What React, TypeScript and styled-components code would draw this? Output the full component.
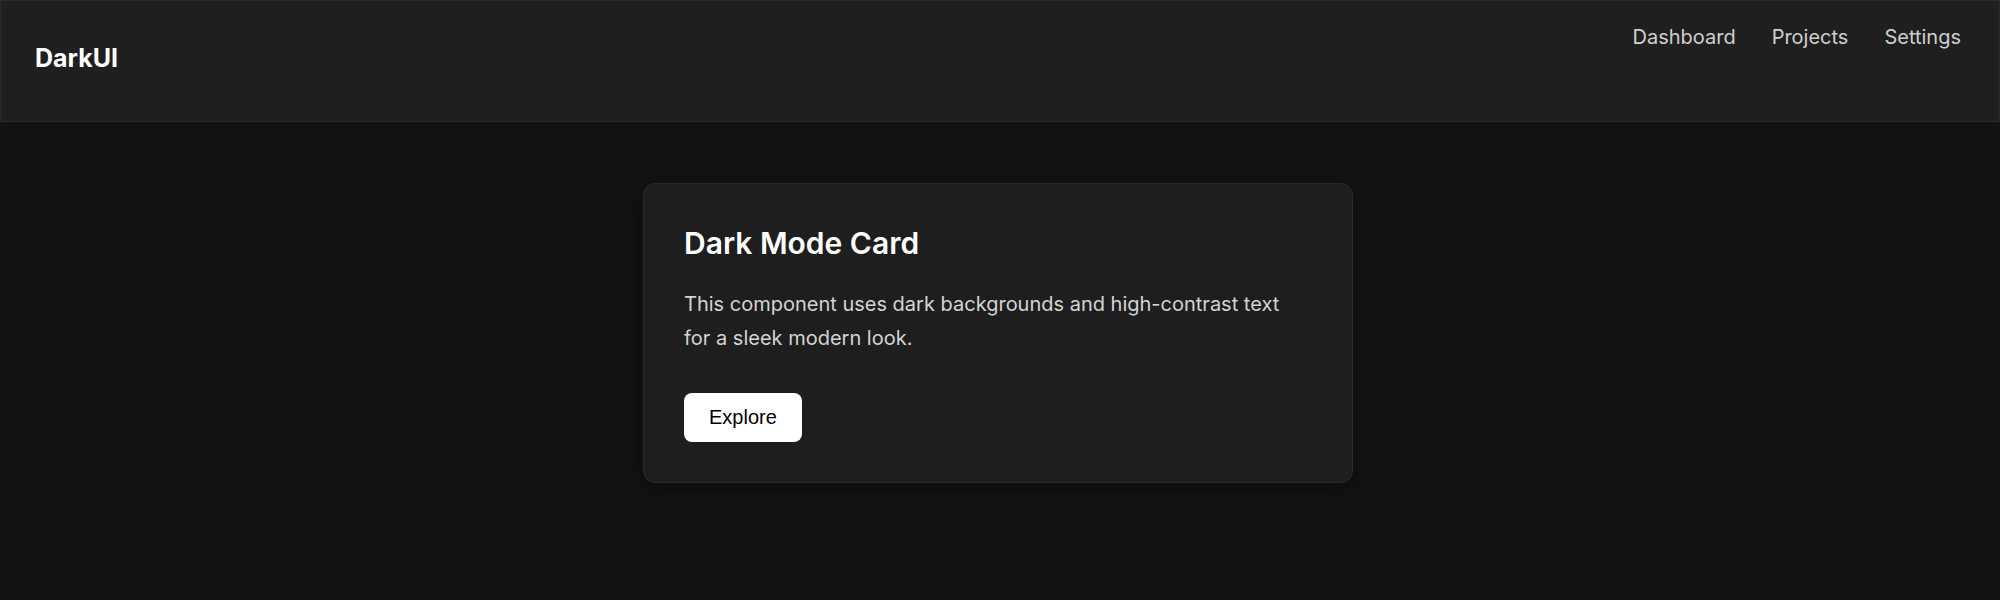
import React from 'react';
import styled, { createGlobalStyle } from 'styled-components';

const GlobalStyle = createGlobalStyle`
  html, body {
    margin: 0;
    padding: 0;
    background: #121212;
    font-family: Inter, 'Noto Sans', sans-serif;
    color: #fff;
  }
`;

const Page = styled.div`
  min-height: 100vh;
  background: #121212;
`;

const Header = styled.header`
  box-sizing: border-box;
  height: 122px;
  display: flex;
  justify-content: space-between;
  align-items: flex-start;
  padding: 24px 38px 24px 34px;
  background: #1f1f1f;
  border: 1px solid #2a2a2a;
`;

const Logo = styled.div`
  margin-top: 18px;
  font-size: 25px;
  font-weight: 650;
  color: #fff;
`;

const Nav = styled.nav`
  display: flex;
  gap: 36px;
`;

const NavLink = styled.a`
  font-size: 20px;
  color: #cfcfcf;
  text-decoration: none;
  cursor: pointer;
`;

const Main = styled.main`
  padding: 61px 4px 0 0;
`;

const Card = styled.section`
  box-sizing: border-box;
  width: 710px;
  margin: 0 auto;
  padding: 40px;
  background: #1e1e1e;
  border: 1px solid #2a2a2a;
  border-radius: 12px;
  box-shadow: 0 4px 16px rgba(0, 0, 0, 0.4);
`;

const Title = styled.h2`
  margin: 0;
  font-size: 30px;
  font-weight: 600;
  line-height: 1.3;
  color: #fff;
`;

const Text = styled.p`
  margin: 24px 0 0;
  font-size: 20px;
  line-height: 1.7;
  color: #d4d4d4;
`;

const Button = styled.button`
  margin-top: 38px;
  padding: 13px 25px;
  border: none;
  border-radius: 8px;
  background: #fff;
  color: #000;
  font-family: 'Liberation Sans', Arial, sans-serif;
  font-size: 20px;
  cursor: pointer;
`;

export default function App() {
  return (
    <Page>
      <GlobalStyle />
      <Header>
        <Logo>DarkUI</Logo>
        <Nav>
          <NavLink>Dashboard</NavLink>
          <NavLink>Projects</NavLink>
          <NavLink>Settings</NavLink>
        </Nav>
      </Header>
      <Main>
        <Card>
          <Title>Dark Mode Card</Title>
          <Text>
            This component uses dark backgrounds and high-contrast text
            <br />
            for a sleek modern look.
          </Text>
          <Button>Explore</Button>
        </Card>
      </Main>
    </Page>
  );
}
